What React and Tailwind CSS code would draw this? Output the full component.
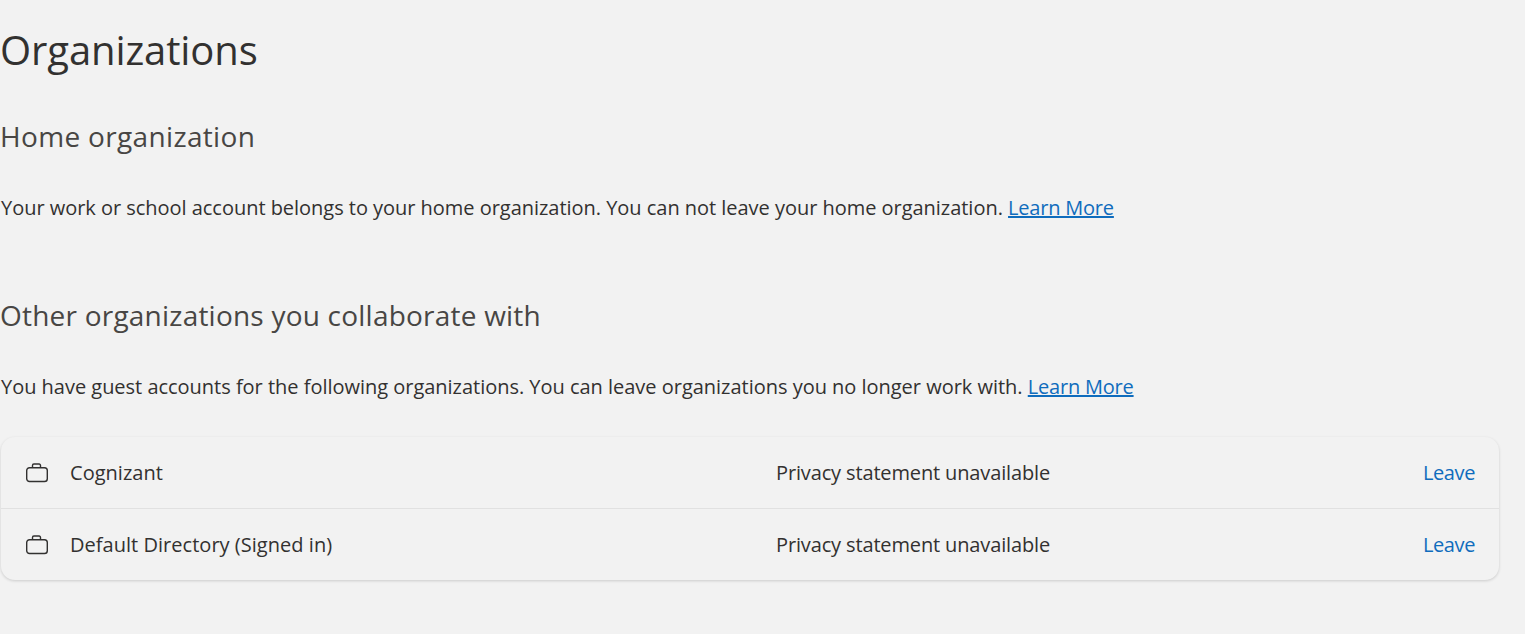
const FONT = "font-['Open_Sans','Noto_Sans',sans-serif]";

function BriefcaseIcon() {
  return (
    <svg width="22" height="20" viewBox="0 0 22 20" fill="none" stroke="#323130" strokeWidth="1.4" className="shrink-0">
      <rect x="0.7" y="4.7" width="20.6" height="13.8" rx="2.8" />
      <path d="M6.5 4.7V2.4a1.4 1.4 0 0 1 1.4-1.4h5.2a1.4 1.4 0 0 1 1.4 1.4v2.3" />
    </svg>
  );
}

function OrgRow({ name, last }) {
  return (
    <div className={`flex items-center pl-[25px] pr-6 ${last ? 'h-[71px]' : 'h-[72px] border-b border-[#e1e1e1]'}`}>
      <BriefcaseIcon />
      <span className="ml-[22px] w-[706px] text-[20px] tracking-[0.03px] text-[#323130]">{name}</span>
      <span className="flex-1 text-[20px] tracking-[-0.14px] text-[#323130]">Privacy statement unavailable</span>
      <a className="text-[20px] tracking-[-0.4px] text-[#0f6cbd]">Leave</a>
    </div>
  );
}

export default function App() {
  return (
    <div className={`h-[634px] overflow-hidden bg-[#f2f2f2] pl-px pr-[26px] ${FONT}`}>
      <h1 className="-ml-px pt-[22px] text-[40px] leading-[56px] tracking-[-0.1px] text-[#323130]">Organizations</h1>
      <h2 className="-ml-px mt-[39px] text-[28px] leading-[38px] tracking-[0.34px] text-[#484644]">Home organization</h2>
      <p className="mt-[39px] text-[20px] leading-[28px] tracking-[-0.03px] text-[#323130]">
        Your work or school account belongs to your home organization. You can not leave your home organization.{' '}
        <a className="tracking-[-0.2px] text-[#0f6cbd] underline">Learn More</a>
      </p>
      <h2 className="-ml-px mt-[74px] text-[28px] leading-[38px] tracking-[0.22px] text-[#484644]">Other organizations you collaborate with</h2>
      <p className="mt-[39px] text-[20px] leading-[28px] tracking-[-0.02px] text-[#323130]">
        You have guest accounts for the following organizations. You can leave organizations you no longer work with.{' '}
        <a className="tracking-[-0.2px] text-[#0f6cbd] underline">Learn More</a>
      </p>
      <div className="mt-[36px] rounded-[14px] bg-[#f2f2f2] shadow-[0_1px_3px_rgba(0,0,0,0.16)]">
        <OrgRow name="Cognizant" />
        <OrgRow name="Default Directory (Signed in)" last />
      </div>
    </div>
  );
}
